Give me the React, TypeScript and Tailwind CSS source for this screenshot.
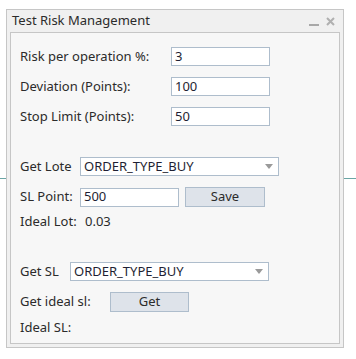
import React from "react";

const font = { fontFamily: '"Noto Sans", "Open Sans", sans-serif' };

function Label({ w, children }: { w: string; children: React.ReactNode }) {
	return <div className={`${w} shrink-0 text-[13px] text-[#2b2b2b]`}>{children}</div>;
}

function Field({ w, value }: { w: string; value: string }) {
	return (
		<div
			className={`${w} h-[19px] border border-[#aebdcc] bg-white px-[3px] flex items-center text-[13px] text-[#1f1f33]`}
		>
			{value}
		</div>
	);
}

function Select({ w, value }: { w: string; value: string }) {
	return (
		<div
			className={`${w} h-[19px] border border-[#aebdcc] bg-white pl-[3px] pr-[4px] flex items-center justify-between text-[13px] text-[#1f1f33]`}
		>
			<span>{value}</span>
			<svg width="8" height="5" viewBox="0 0 8 5" className="mr-[1px]">
				<path d="M0 0 H8 L4 5 Z" fill="#9a9a9a" />
			</svg>
		</div>
	);
}

function Button({ w, label }: { w: string; label: string }) {
	return (
		<div
			className={`${w} h-[20px] border border-[#aebdcc] bg-[#dee3ea] flex items-center justify-center text-[13px] text-[#2b2b2b]`}
		>
			{label}
		</div>
	);
}

export default function App() {
	return (
		<div className="relative w-[356px] h-[359px] bg-white overflow-hidden" style={font}>
			{/* chart line behind the dialog */}
			<div className="absolute left-0 right-0 top-[178px] h-px bg-[#6aa5a5]" />

			<div className="relative ml-[6px] mt-[9px] w-[338px] h-[339px] border border-[#c6c6c6] bg-[#f0f0f0] flex flex-col">
				<div className="h-[22px] flex items-center justify-between pl-[5px] pr-[8px]">
					<span className="text-[13px] text-[#2b2b2b]">Test Risk Management</span>
					<div className="flex items-center gap-[7px]">
						<div className="w-[10px] h-[2px] bg-[#a8a8a8] mt-[7px]" />
						<svg width="9" height="9" viewBox="0 0 9 9">
							<path d="M1 1 L8 8 M8 1 L1 8" stroke="#b0b0b0" strokeWidth="2" />
						</svg>
					</div>
				</div>

				<div className="mx-[3px] mb-[3px] flex-1 border border-[#c6c6c6] bg-[#f7f7f7] pl-[9px] pt-[14px] flex flex-col">
					<div className="flex items-center h-[19px]">
						<Label w="w-[151px]">Risk per operation %:</Label>
						<Field w="w-[99px]" value="3" />
					</div>
					<div className="flex items-center h-[19px] mt-[11px]">
						<Label w="w-[151px]">Deviation (Points):</Label>
						<Field w="w-[99px]" value="100" />
					</div>
					<div className="flex items-center h-[19px] mt-[11px]">
						<Label w="w-[151px]">Stop Limit (Points):</Label>
						<Field w="w-[99px]" value="50" />
					</div>

					<div className="flex items-center h-[19px] mt-[31px]">
						<Label w="w-[60px]">Get Lote</Label>
						<Select w="w-[199px]" value="ORDER_TYPE_BUY" />
					</div>
					<div className="flex items-center h-[20px] mt-[11px]">
						<Label w="w-[60px]">SL Point:</Label>
						<Field w="w-[99px]" value="500" />
						<div className="ml-[6px]">
							<Button w="w-[80px]" label="Save" />
						</div>
					</div>
					<div className="flex items-center h-[19px] mt-[5px]">
						<Label w="w-[65px]">Ideal Lot:</Label>
						<span className="text-[13px] text-[#2b2b2b]">0.03</span>
					</div>

					<div className="flex items-center h-[19px] mt-[31px]">
						<Label w="w-[50px]">Get SL</Label>
						<Select w="w-[199px]" value="ORDER_TYPE_BUY" />
					</div>
					<div className="flex items-center h-[20px] mt-[11px]">
						<Label w="w-[90px]">Get ideal sl:</Label>
						<Button w="w-[79px]" label="Get" />
					</div>
					<div className="flex items-center h-[19px] mt-[6px]">
						<Label w="w-[90px]">Ideal SL:</Label>
					</div>
				</div>
			</div>
		</div>
	);
}
